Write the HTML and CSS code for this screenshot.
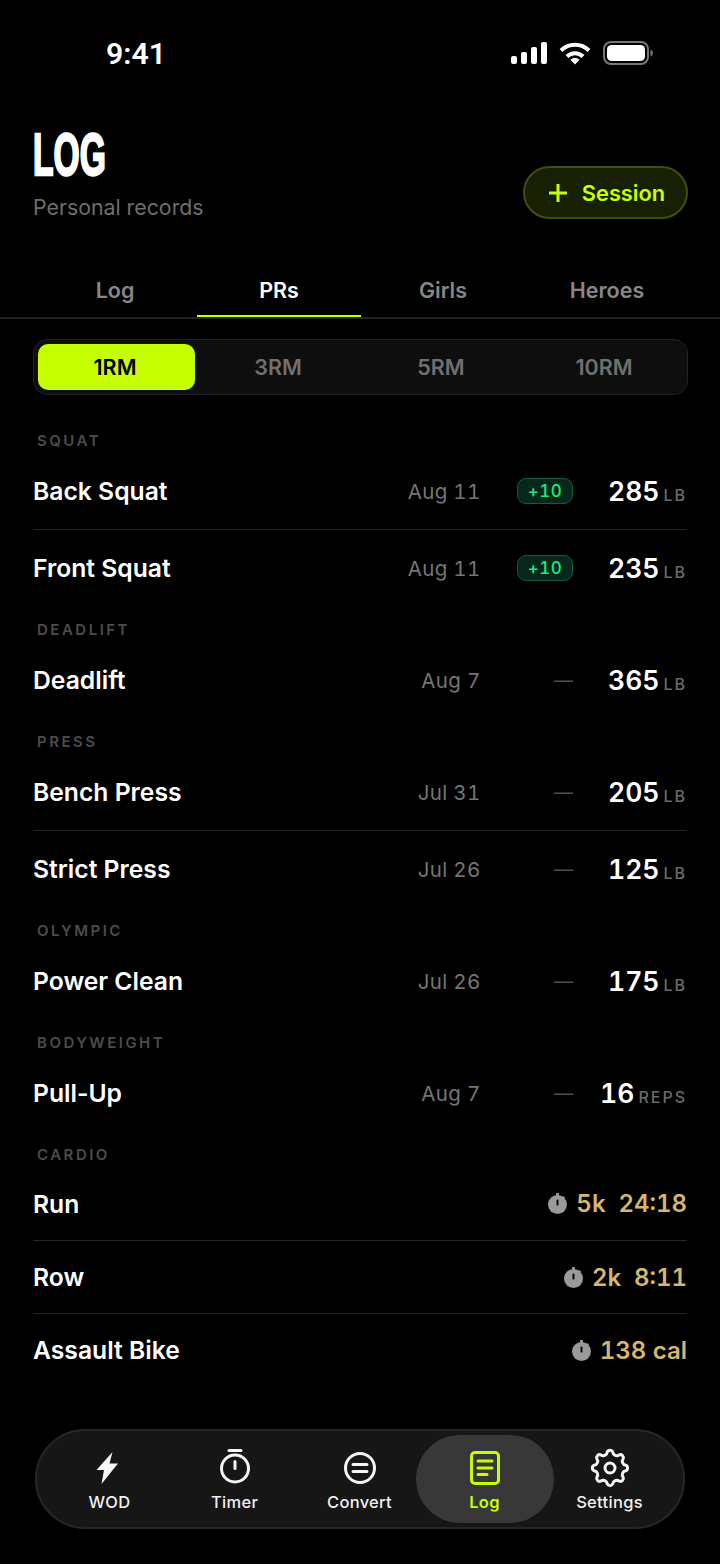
FILE: index.html
```html
<!DOCTYPE html>
<html lang="en">
<head>
  <meta charset="UTF-8">
  <meta name="viewport" content="width=device-width, initial-scale=1.0">
  <title>Log</title>
  <link rel="stylesheet" href="styles.css">
</head>
<body>

  <!-- Status bar -->
  <div class="status-bar">
    <span class="status-time">9:41</span>
    <div class="status-icons">
      <svg width="36" height="22" viewBox="0 0 36 22" fill="#fff">
        <rect x="0" y="14" width="6" height="8" rx="2"/>
        <rect x="10" y="10" width="6" height="12" rx="2"/>
        <rect x="20" y="5" width="6" height="17" rx="2"/>
        <rect x="30" y="0" width="6" height="22" rx="2"/>
      </svg>
      <svg width="32" height="24" viewBox="0 0 32 24" fill="none" stroke="#fff" stroke-width="4">
        <path d="M2 9.500C9.800 1.800 22.200 1.800 30 9.500"/>
        <path d="M8 15.500C12.400 11 19.600 11 24 15.500"/>
        <path d="M16 23.500l-4.600-4.700c2.600-2.400 6.600-2.400 9.200 0z" fill="#fff" stroke="none"/>
      </svg>
      <svg width="50" height="24" viewBox="0 0 50 24" fill="none">
        <rect x="1" y="1" width="44" height="22" rx="7" stroke="#777" stroke-width="2"/>
        <rect x="4" y="4" width="38" height="16" rx="4.500" fill="#fff"/>
        <path d="M47.500 8.500v7c1.500-.6 2.500-2 2.500-3.500s-1-2.900-2.500-3.500z" fill="#777"/>
      </svg>
    </div>
  </div>

  <!-- Header -->
  <div class="header">
    <div>
      <h1><span class="title-text">LOG</span></h1>
      <p class="subtitle">Personal records</p>
    </div>
    <button class="session-button">
      <svg width="20" height="20" viewBox="0 0 20 20" stroke="#c6ff00" stroke-width="3"><path d="M10 1v18M1 10h18"/></svg>
      Session
    </button>
  </div>

  <!-- Tabs -->
  <div class="tabs">
    <div class="tab">Log</div>
    <div class="tab active">PRs</div>
    <div class="tab">Girls</div>
    <div class="tab">Heroes</div>
  </div>

  <div class="rep-select">
    <div class="rep-option active">1RM</div>
    <div class="rep-option">3RM</div>
    <div class="rep-option">5RM</div>
    <div class="rep-option">10RM</div>
  </div>

  <!-- Records -->
  <div class="records">
    <div class="section-label">SQUAT</div>
    <div class="record">
      <span class="record-name">Back Squat</span>
      <span class="record-date">Aug 11</span>
      <span class="record-delta"><span class="delta-badge">+10</span></span>
      <span class="record-value">285<small>LB</small></span>
    </div>
    <div class="record">
      <span class="record-name">Front Squat</span>
      <span class="record-date">Aug 11</span>
      <span class="record-delta"><span class="delta-badge">+10</span></span>
      <span class="record-value">235<small>LB</small></span>
    </div>

    <div class="section-label">DEADLIFT</div>
    <div class="record">
      <span class="record-name">Deadlift</span>
      <span class="record-date">Aug 7</span>
      <span class="record-delta">—</span>
      <span class="record-value">365<small>LB</small></span>
    </div>

    <div class="section-label">PRESS</div>
    <div class="record">
      <span class="record-name">Bench Press</span>
      <span class="record-date">Jul 31</span>
      <span class="record-delta">—</span>
      <span class="record-value">205<small>LB</small></span>
    </div>
    <div class="record">
      <span class="record-name">Strict Press</span>
      <span class="record-date">Jul 26</span>
      <span class="record-delta">—</span>
      <span class="record-value">125<small>LB</small></span>
    </div>

    <div class="section-label">OLYMPIC</div>
    <div class="record">
      <span class="record-name">Power Clean</span>
      <span class="record-date">Jul 26</span>
      <span class="record-delta">—</span>
      <span class="record-value">175<small>LB</small></span>
    </div>

    <div class="section-label">BODYWEIGHT</div>
    <div class="record">
      <span class="record-name">Pull-Up</span>
      <span class="record-date">Aug 7</span>
      <span class="record-delta">—</span>
      <span class="record-value">16<small>REPS</small></span>
    </div>

    <div class="section-label">CARDIO</div>
    <div class="record cardio">
      <span class="record-name">Run</span>
      <span class="cardio-value">
        <svg class="stopwatch" viewBox="0 0 20 22"><path d="M10 2a10 10 0 1 0 0 20a10 10 0 0 0 0-20z" fill="#9a9a9a"/><path d="M8.500 0h3v3h-3zM16 3l2 2-1.500 1.500-2-2z" fill="#9a9a9a"/><path d="M10 7v6" stroke="#000" stroke-width="2"/></svg>
        5k&nbsp; 24:18
      </span>
    </div>
    <div class="record cardio">
      <span class="record-name">Row</span>
      <span class="cardio-value">
        <svg class="stopwatch" viewBox="0 0 20 22"><path d="M10 2a10 10 0 1 0 0 20a10 10 0 0 0 0-20z" fill="#9a9a9a"/><path d="M8.500 0h3v3h-3zM16 3l2 2-1.500 1.500-2-2z" fill="#9a9a9a"/><path d="M10 7v6" stroke="#000" stroke-width="2"/></svg>
        2k&nbsp; 8:11
      </span>
    </div>
    <div class="record cardio">
      <span class="record-name">Assault Bike</span>
      <span class="cardio-value">
        <svg class="stopwatch" viewBox="0 0 20 22"><path d="M10 2a10 10 0 1 0 0 20a10 10 0 0 0 0-20z" fill="#9a9a9a"/><path d="M8.500 0h3v3h-3zM16 3l2 2-1.500 1.500-2-2z" fill="#9a9a9a"/><path d="M10 7v6" stroke="#000" stroke-width="2"/></svg>
        138 cal
      </span>
    </div>
  </div>

  <!-- Bottom nav -->
  <nav class="bottom-nav">
    <div class="nav-item">
      <svg width="48" height="48" viewBox="0 0 48 48" fill="#f5f5f5"><path d="M26.500 8L10.500 26h7.500l-2.500 14L32 19.500h-8.500z"/></svg>
      WOD
    </div>
    <div class="nav-item">
      <svg width="48" height="48" viewBox="0 0 48 48" fill="none" stroke="#f5f5f5" stroke-width="3"><circle cx="24" cy="24.500" r="13.500"/><path d="M18 6.500h12M24 17.500v7" stroke-linecap="round"/></svg>
      Timer
    </div>
    <div class="nav-item">
      <svg width="48" height="48" viewBox="0 0 48 48" fill="none" stroke="#f5f5f5" stroke-width="3"><circle cx="24" cy="24" r="14.500"/><path d="M17 20.500h14M17 27.500h14" stroke-linecap="round"/></svg>
      Convert
    </div>
    <div class="nav-item active">
      <svg width="48" height="48" viewBox="0 0 48 48" fill="none" stroke="#c6ff00" stroke-width="3"><rect x="10.500" y="8.500" width="27" height="31" rx="3.500"/><path d="M17 17h14M17 24h14M17 30.500h9" stroke-linecap="round"/></svg>
      Log
    </div>
    <div class="nav-item">
      <svg width="48" height="48" viewBox="0 0 48 48" fill="none" stroke="#f5f5f5" stroke-width="3"><path d="M21.220 8.240A3 3 0 0 1 26.780 8.240A4 4 0 0 0 33.180 10.890A3 3 0 0 1 37.110 14.820A4 4 0 0 0 39.760 21.220A3 3 0 0 1 39.760 26.780A4 4 0 0 0 37.110 33.180A3 3 0 0 1 33.180 37.110A4 4 0 0 0 26.780 39.760A3 3 0 0 1 21.220 39.760A4 4 0 0 0 14.820 37.110A3 3 0 0 1 10.890 33.180A4 4 0 0 0 8.240 26.780A3 3 0 0 1 8.240 21.220A4 4 0 0 0 10.890 14.820A3 3 0 0 1 14.820 10.890A4 4 0 0 0 21.220 8.240z" stroke-linejoin="round"/><circle cx="24" cy="24" r="5"/></svg>
      Settings
    </div>
  </nav>

</body>
</html>
```

FILE: styles.css
```css
/* Basic Reset */
* {
  margin: 0;
  padding: 0;
  box-sizing: border-box;
}

body {
  width: 720px;
  height: 1564px;
  overflow: hidden;
  background-color: #000;
  color: #fff;
  font-family: Inter, "Noto Sans", sans-serif;
}

/* Status bar */
.status-bar {
  display: flex;
  align-items: center;
  justify-content: space-between;
  height: 106px;
  padding: 0 67px 0 106px;
}

.status-time {
  font-size: 30.200px;
  font-weight: 600;
  font-family: Roboto, Inter, sans-serif;
}

.status-icons {
  display: flex;
  align-items: center;
  gap: 12px;
}

/* Header */
.header {
  display: flex;
  align-items: flex-end;
  justify-content: space-between;
  height: 115px;
  padding: 0 32px 0 33px;
}

h1 {
  font-family: "Liberation Sans", sans-serif;
  font-size: 60px;
  line-height: 62px;
  font-weight: 700;
}

.title-text {
  display: inline-block;
  transform: scaleX(0.56);
  transform-origin: left center;
  -webkit-text-stroke: 2.500px #fff;
}

.subtitle {
  margin-top: 7px;
  font-size: 21.300px;
  line-height: 28px;
  color: #6e6e6e;
}

.session-button {
  display: flex;
  align-items: center;
  justify-content: center;
  gap: 14px;
  width: 165px;
  height: 53px;
  margin-bottom: 2px;
  padding-left: 2px;
  background-color: #182004;
  border: 2px solid #3f5008;
  border-radius: 27px;
  color: #c6ff00;
  font-family: inherit;
  font-size: 21.800px;
  font-weight: 600;
}

/* Tabs */
.tabs {
  display: grid;
  grid-template-columns: repeat(4, 164px);
  height: 98px;
  padding: 0 33px;
  align-items: end;
  border-bottom: 2px solid #222;
}

.tab {
  height: 56px;
  padding-top: 16px;
  text-align: center;
  font-size: 21.500px;
  font-weight: 600;
  color: #878787;
}

.tab.active {
  color: #fff;
  border-bottom: 2px solid #c6ff00;
}

/* Rep selector */
.rep-select {
  display: grid;
  grid-template-columns: repeat(4, 157px);
  gap: 6px;
  height: 56px;
  margin: 20px 32px 0 33px;
  padding: 4px;
  background-color: #0e0e0e;
  border: 1px solid #222;
  border-radius: 14px;
}

.rep-option {
  display: flex;
  align-items: center;
  justify-content: center;
  padding-right: 3px;
  font-size: 21.500px;
  font-weight: 600;
  color: #707070;
}

.rep-option.active {
  background-color: #c6ff00;
  border-radius: 10px;
  color: #000;
}

/* Records */
.records {
  margin: 22px 33px 0;
}

.section-label {
  height: 36px;
  padding: 17px 0 0 4px;
  font-size: 15px;
  line-height: 14px;
  font-weight: 600;
  letter-spacing: 2.500px;
  color: #4c4c4c;
}

.record {
  display: flex;
  align-items: center;
  height: 76px;
}

.record + .record {
  border-top: 1px solid #242424;
  height: 77px;
}

.record-name {
  flex: 1;
  font-size: 24.700px;
  font-weight: 600;
}

.record-date {
  font-size: 20.500px;
  letter-spacing: 0.300px;
  font-variant-numeric: tabular-nums;
  color: #757575;
}

.record-delta {
  width: 56px;
  margin-left: 36.500px;
  text-align: right;
  color: #4f4f4f;
  font-size: 19px;
}

.delta-badge {
  display: block;
  height: 26px;
  line-height: 24px;
  text-align: center;
  background-color: #06281a;
  border: 1px solid #115c3c;
  border-radius: 9px;
  color: #16ec7d;
  font-size: 17px;
  font-weight: 500;
  letter-spacing: 0.500px;
  font-variant-numeric: tabular-nums;
}

.record-value {
  width: 114px;
  text-align: right;
  font-size: 26.500px;
  font-weight: 600;
  font-variant-numeric: tabular-nums;
}

.record-value small {
  margin-left: 4px;
  font-size: 16px;
  font-weight: 500;
  letter-spacing: 2px;
  color: #6a6a6a;
}

.record.cardio {
  height: 73px;
}

.cardio-value {
  display: flex;
  align-items: center;
  gap: 9px;
  font-size: 24px;
  font-weight: 600;
  font-variant-numeric: tabular-nums;
  color: #d6b56c;
}

.stopwatch {
  width: 19px;
  height: 21px;
}

/* Bottom nav */
.bottom-nav {
  position: absolute;
  left: 35px;
  top: 1429px;
  display: grid;
  grid-template-columns: repeat(5, 1fr);
  width: 650px;
  height: 100px;
  padding: 4px 11px 4px 10px;
  background-color: #161616;
  border: 2px solid #272727;
  border-radius: 50px;
}

.nav-item {
  display: flex;
  flex-direction: column;
  align-items: center;
  padding-top: 9px;
  font-size: 16.500px;
  font-weight: 500;
  letter-spacing: 0.300px;
  line-height: 22px;
  color: #f0f0f0;
}

.nav-item svg {
  margin-bottom: -1px;
}

.nav-item.active {
  margin: 0 -6.500px;
  background-color: #383838;
  border-radius: 44px;
  color: #c6ff00;
  font-weight: 600;
}
```
